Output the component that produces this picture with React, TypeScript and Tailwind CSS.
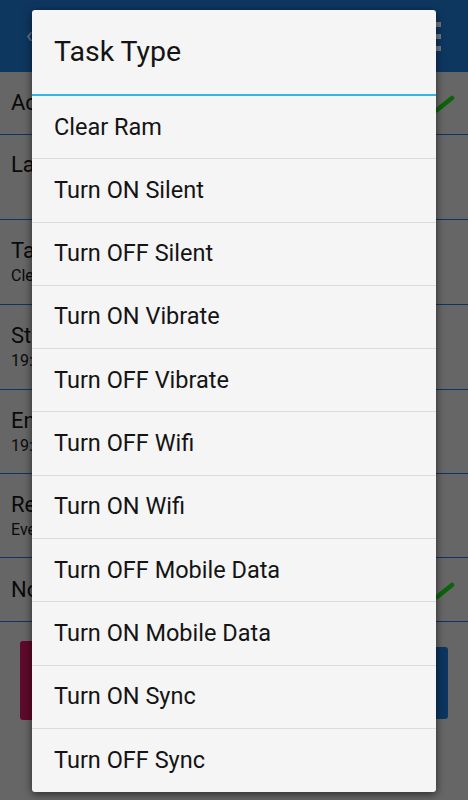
import React from 'react';

const taskTypes = [
  'Clear Ram',
  'Turn ON Silent',
  'Turn OFF Silent',
  'Turn ON Vibrate',
  'Turn OFF Vibrate',
  'Turn OFF Wifi',
  'Turn ON Wifi',
  'Turn OFF Mobile Data',
  'Turn ON Mobile Data',
  'Turn ON Sync',
  'Turn OFF Sync',
];

const Check: React.FC = () => (
  <svg width="24" height="24" viewBox="0 0 24 24" className="absolute right-[12px]">
    <path d="M5 19 L20 7" stroke="#0a640a" strokeWidth="4.5" strokeLinecap="round" fill="none" />
  </svg>
);

const Row: React.FC<{ label: string; sub?: string; h: string; check?: boolean; top?: boolean }> = ({ label, sub, h, check, top }) => (
  <div className={`relative flex flex-col ${top ? 'justify-start pt-[16px]' : 'justify-center'} px-[11px] border-b border-[#0c3563] ${h}`}>
    <p className="text-[22px] leading-[28px] text-[#0a0a0a]">{label}</p>
    {sub && <p className="text-[16px] leading-[22px] text-[#0a0a0a]">{sub}</p>}
    {check && (
      <div className="absolute inset-y-0 right-0 flex items-center">
        <Check />
      </div>
    )}
  </div>
);

const App: React.FC = () => {
  return (
    <div className="relative w-[468px] h-[800px] overflow-hidden bg-[#666666]" style={{ fontFamily: 'Roboto, "Noto Sans", sans-serif' }}>
      {/* dimmed screen behind the dialog */}
      <div className="h-[72px] bg-[#0e3760] flex items-center justify-between pl-[26px] pr-[27px]">
        <span className="text-[#6b7c8e] text-[22px] leading-none">&lsaquo;</span>
        <div className="flex flex-col gap-[7px]">
          <span className="block w-[5px] h-[5px] bg-[#707a84]" />
          <span className="block w-[5px] h-[5px] bg-[#707a84]" />
          <span className="block w-[5px] h-[5px] bg-[#707a84]" />
        </div>
      </div>
      <Row label="Active" h="h-[63px]" check />
      <Row label="Label" h="h-[85px]" top />
      <Row label="Task Type" sub="Clear Ram" h="h-[85px]" />
      <Row label="Start Time" sub="19:00" h="h-[85px]" />
      <Row label="End Time" sub="19:30" h="h-[84px]" />
      <Row label="Repeat" sub="Everyday" h="h-[84px]" />
      <Row label="Notification" h="h-[64px]" check />
      <div className="flex gap-[14px] px-[20px] pt-[19px]">
        <div className="flex-1 h-[79px] rounded-[3px] bg-[#5e0a2a] flex items-center justify-center text-[#777] text-[20px]">Delete</div>
        <div className="flex-1 h-[72px] mt-[6px] rounded-[3px] bg-[#0c365f] flex items-center justify-center text-[#777] text-[20px]">Save</div>
      </div>

      {/* dialog */}
      <div className="absolute left-[32px] top-[10px] w-[404px] bg-[#f5f5f5] rounded-[3px] shadow-[0_2px_8px_rgba(0,0,0,0.6)]">
        <div className="h-[84px] flex items-center pl-[22px]">
          <h2 className="text-[28.5px] leading-none text-[#141414]">Task Type</h2>
        </div>
        <div className="h-[2px] bg-[#33b5e5]" />
        <ul>
          {taskTypes.map((t, i) => (
            <li
              key={t}
              className={`h-[63.3px] flex items-center pl-[22px] text-[23.5px] text-[#141414] ${i < taskTypes.length - 1 ? 'border-b border-[#dcdcdc]' : ''}`}
            >
              {t}
            </li>
          ))}
        </ul>
      </div>
    </div>
  );
};

export default App;
